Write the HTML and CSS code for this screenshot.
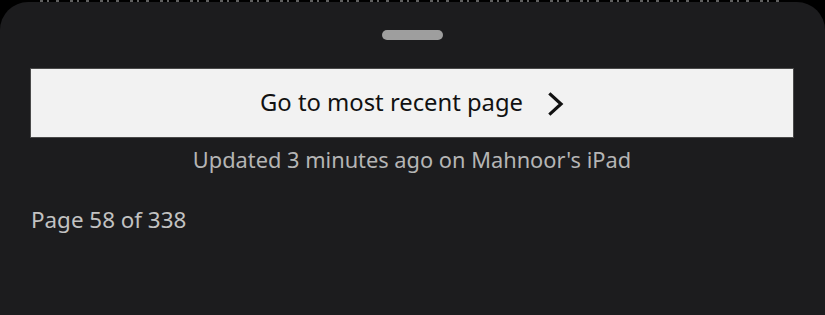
FILE: index.html
```html
<!DOCTYPE html>
<html lang="en">
<head>
<meta charset="utf-8">
<title>Go to most recent page</title>
<link rel="stylesheet" href="styles.css">
</head>
<body>
<div class="peek" aria-hidden="true"></div>
<section class="sheet">
  <div class="handle"></div>
  <button class="recent-btn" type="button">
    <span class="recent-label">Go to most recent page</span>
    <svg class="chevron" width="16" height="24" viewBox="0 0 16 24" aria-hidden="true">
      <path d="M2.5 2.5 L13 12 L2.5 21.5" fill="none" stroke="#111" stroke-width="3.2" stroke-linecap="square" stroke-linejoin="miter"/>
    </svg>
  </button>
  <p class="updated">Updated 3 minutes ago on Mahnoor's iPad</p>
  <p class="page-info">Page 58 of 338</p>
</section>
</body>
</html>
```
FILE: styles.css
```css
html, body {
  margin: 0;
  padding: 0;
  background: #000;
  height: 100%;
  overflow: hidden;
  font-family: "Noto Sans", "Open Sans", sans-serif;
}

.peek {
  height: 2px;
  margin: 0 40px;
  background: repeating-linear-gradient(90deg, #8a8a8a 0 3px, transparent 3px 7px, #8a8a8a 7px 9px, transparent 9px 16px, #8a8a8a 16px 19px, transparent 19px 30px);
  opacity: 0.7;
}

.sheet {
  background: #1c1c1e;
  border-radius: 28px 28px 0 0;
  height: 313px;
  padding: 28px 31px 0 30px;
  box-sizing: border-box;
  display: flex;
  flex-direction: column;
}

.handle {
  align-self: center;
  width: 61px;
  height: 10px;
  border-radius: 5px;
  background: #9e9e9e;
}

.recent-btn {
  margin-top: 28px;
  height: 70px;
  background: #f2f2f2;
  border: 1px solid #4a4a4a;
  border-radius: 0;
  display: flex;
  align-items: center;
  justify-content: center;
  gap: 25px;
  padding: 0 0 0 0;
  font-family: inherit;
  cursor: pointer;
}

.recent-label {
  font-size: 23.8px;
  color: #111;
  line-height: 1;
}

.chevron {
  display: block;
  margin-top: 1px;
}

.updated {
  margin: 8px 0 0;
  text-align: center;
  font-size: 21.8px;
  line-height: 28px;
  color: #b5b5b5;
}

.page-info {
  margin: 32px 0 0 1px;
  font-size: 22.4px;
  line-height: 28px;
  color: #c2c2c2;
}
```
